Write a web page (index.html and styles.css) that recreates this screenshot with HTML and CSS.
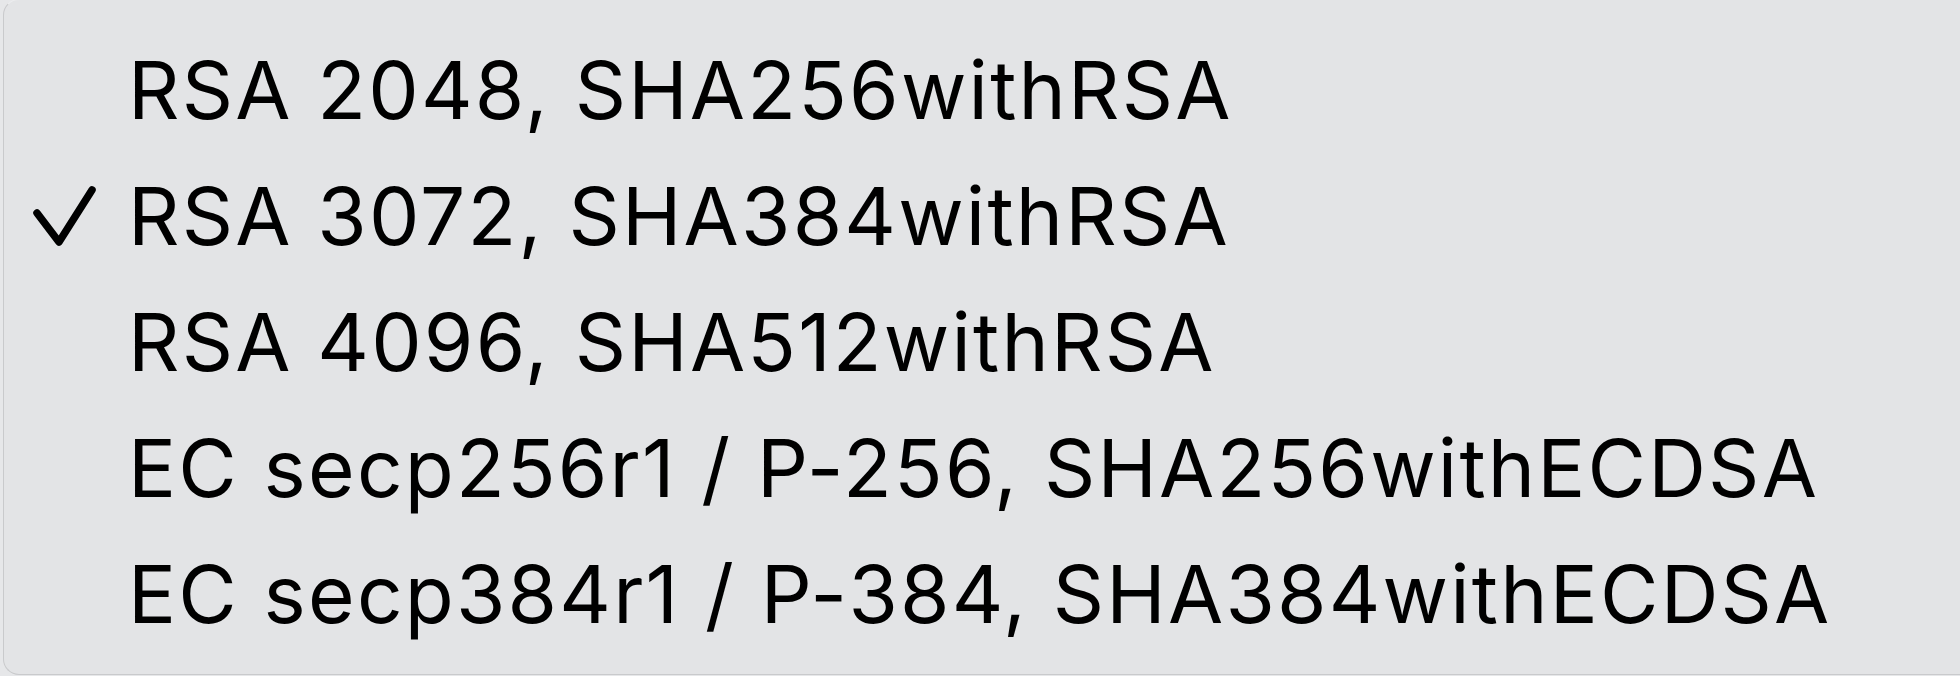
FILE: index.html
```html
<!DOCTYPE html>
<html lang="en">
<head>
<meta charset="utf-8">
<title>Signature algorithm menu</title>
<link rel="stylesheet" href="styles.css">
</head>
<body>
<div class="menu">
  <div class="item"><span class="mark"></span><span class="label">RSA 2048, SHA256withRSA</span></div>
  <div class="item checked"><span class="mark"><svg width="124" height="126" viewBox="0 0 124 126"><polyline points="33,60 55,89 88,37" fill="none" stroke="#000" stroke-width="7.5" stroke-linecap="round" stroke-linejoin="round"/></svg></span><span class="label">RSA 3072, SHA384withRSA</span></div>
  <div class="item"><span class="mark"></span><span class="label">RSA 4096, SHA512withRSA</span></div>
  <div class="item"><span class="mark"></span><span class="label">EC secp256r1 / P-256, SHA256withECDSA</span></div>
  <div class="item"><span class="mark"></span><span class="label">EC secp384r1 / P-384, SHA384withECDSA</span></div>
</div>
</body>
</html>
```
FILE: styles.css
```css
html, body {
  margin: 0;
  padding: 0;
  background: #e6e7e9;
  overflow: hidden;
}
body {
  width: 1960px;
  height: 676px;
}
.menu {
  margin-left: 3px;
  margin-top: -1px;
  height: 676px;
  box-sizing: border-box;
  background: #e3e4e6;
  border: 1px solid #c9cacc;
  border-right: none;
  border-top-color: #ecedef;
  border-radius: 16px 0 0 16px;
  padding-top: 27px;
  display: flex;
  flex-direction: column;
  font-family: Inter, "Liberation Sans", sans-serif;
  font-size: 80px;
  color: #000;
}
.item {
  display: flex;
  align-items: center;
  height: 126px;
  line-height: 126px;
}
.mark {
  width: 124px;
  height: 126px;
  flex: none;
  display: flex;
}
.label {
  white-space: nowrap;
  letter-spacing: 2.2px;
}
```
